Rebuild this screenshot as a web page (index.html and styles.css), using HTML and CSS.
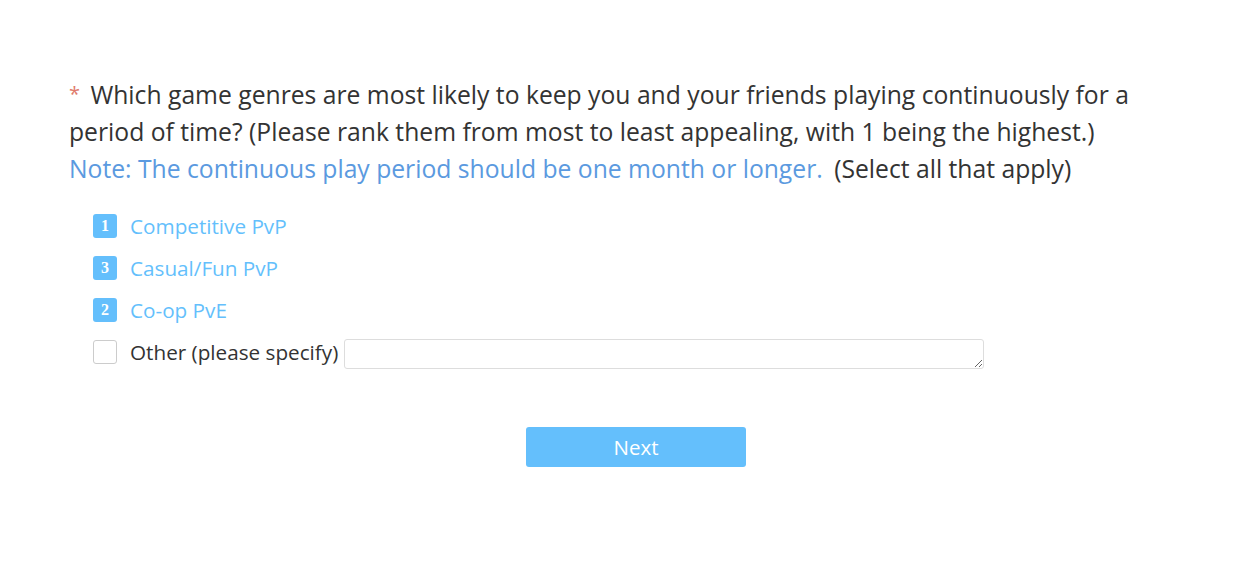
FILE: index.html
```html
<!DOCTYPE html>
<html>
<head>
<meta charset="utf-8">
<link rel="stylesheet" href="styles.css">
</head>
<body>
<div class="page">
  <div class="question">
    <span class="req">*</span> Which game genres are most likely to keep you and your friends playing continuously for a period of time? (Please rank them from most to least appealing, with 1 being the highest.)<br><span class="note">Note: The continuous play period should be one month or longer.</span> (Select all that apply)
  </div>
  <div class="options">
    <div class="opt"><span class="badge">1</span><span class="label sel">Competitive PvP</span></div>
    <div class="opt"><span class="badge">3</span><span class="label sel">Casual/Fun PvP</span></div>
    <div class="opt"><span class="badge">2</span><span class="label sel">Co-op PvE</span></div>
    <div class="opt"><span class="box"></span><span class="label">Other (please specify)</span><textarea class="other"></textarea></div>
  </div>
  <div class="actions"><button class="next">Next</button></div>
</div>
</body>
</html>
```
FILE: styles.css
```css
html, body { margin: 0; padding: 0; background: #fff; }
body { font-family: "Open Sans", "Noto Sans", sans-serif; color: #333; }
.page { padding: 76px 0 0 69px; width: 1080px; }
.question { font-size: 24.7px; line-height: 37px; }
.req { display: inline-block; color: #e07b6c; font-size: 20px; line-height: 20px; vertical-align: 3px; margin-right: 4px; }
.note { color: #5b9ae0; margin-right: 5px; }
.options { margin-top: 24px; padding-left: 24px; display: flex; flex-direction: column; gap: 12px; }
.opt { display: flex; align-items: center; height: 30px; font-size: 20.7px; }
.badge { width: 24px; height: 24px; background: #64bffc; color: #fff; border-radius: 3px; font-family: "Liberation Serif", serif; font-weight: bold; font-size: 16px; display: flex; align-items: center; justify-content: center; margin-right: 13px; }
.box { width: 22px; height: 22px; border: 1px solid #ccc; border-radius: 3px; margin-right: 13px; }
.label.sel { color: #64bffc; }
.other { width: 638px; height: 28px; border: 1px solid #ddd; border-radius: 3px; margin: 4px 0 0 6px; padding: 0; resize: vertical; }
.actions { display: flex; justify-content: center; margin-top: 60px; width: 1134px; }
.next { width: 220px; height: 40px; background: #64bffc; color: #fff; border: none; border-radius: 3px; font-family: "Open Sans", sans-serif; font-size: 20.5px; }
```
